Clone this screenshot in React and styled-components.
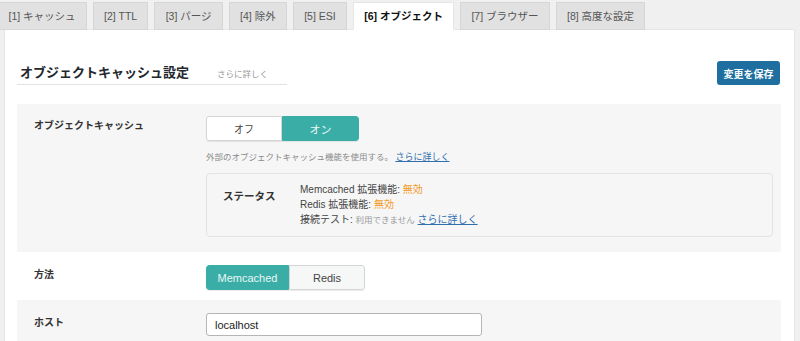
import React from 'react'
import styled, { createGlobalStyle } from 'styled-components'

const GlobalStyle = createGlobalStyle`
  html, body {
    margin: 0;
    padding: 0;
    background: #f0f0f1;
    font-family: "Liberation Sans", "Noto Sans CJK JP", sans-serif;
    color: #333;
  }
`

const tabs = [
  '[1] キャッシュ',
  '[2] TTL',
  '[3] パージ',
  '[4] 除外',
  '[5] ESI',
  '[6] オブジェクト',
  '[7] ブラウザー',
  '[8] 高度な設定',
]

const App = () => {
  return (
    <Page>
      <GlobalStyle />
      <TabBar>
        {tabs.map((t, i) => (
          <Tab key={t} active={i === 5}>{t}</Tab>
        ))}
      </TabBar>
      <Panel>
        <Header>
          <TitleBlock>
            <Title>オブジェクトキャッシュ設定</Title>
            <MoreLink>さらに詳しく</MoreLink>
          </TitleBlock>
          <SaveButton>変更を保存</SaveButton>
        </Header>
        <Section>
          <Row shade>
            <Label>オブジェクトキャッシュ</Label>
            <Field>
              <Toggle>
                <ToggleButton width={76}>オフ</ToggleButton>
                <ToggleButton width={77} on>オン</ToggleButton>
              </Toggle>
              <Desc>
                外部のオブジェクトキャッシュ機能を使用する。 <Link size={9}>さらに詳しく</Link>
              </Desc>
              <StatusBox>
                <StatusLabel>ステータス</StatusLabel>
                <StatusLines>
                  <div>Memcached 拡張機能: <Warn>無効</Warn></div>
                  <div>Redis 拡張機能: <Warn>無効</Warn></div>
                  <div>接続テスト: <Muted>利用できません</Muted> <Link size={10}>さらに詳しく</Link></div>
                </StatusLines>
              </StatusBox>
            </Field>
          </Row>
          <Row>
            <Label>方法</Label>
            <Field>
              <Toggle>
                <ToggleButton width={83} on>Memcached</ToggleButton>
                <ToggleButton width={76} plain>Redis</ToggleButton>
              </Toggle>
            </Field>
          </Row>
          <Row shade last>
            <Label>ホスト</Label>
            <Field>
              <TextInput defaultValue="localhost" />
            </Field>
          </Row>
        </Section>
      </Panel>
    </Page>
  )
}
export default App

const Page = styled.div`
  width: 800px;
  height: 341px;
  overflow: hidden;
`

const TabBar = styled.div`
  display: flex;
  gap: 6px;
  padding-top: 2px;
  margin-left: -3px;
  position: relative;
  z-index: 1;
`

const Tab = styled.div`
  height: 26px;
  line-height: 26px;
  padding: 0 10px 0 10.5px;
  font-size: 10.5px;
  white-space: nowrap;
  border: 1px solid ${(p) => (p.active ? '#e6e6e6' : '#d6d6d6')};
  border-bottom-color: ${(p) => (p.active ? '#fff' : '#d6d6d6')};
  background: ${(p) => (p.active ? '#fff' : '#e1e1e1')};
  color: ${(p) => (p.active ? '#111' : '#555')};
  font-weight: ${(p) => (p.active ? 700 : 400)};
  margin-bottom: -1px;
`

const Panel = styled.div`
  background: #fff;
  margin: 0 5px 0 4px;
  border: 1px solid #e6e6e6;
  padding: 31px 13px 0 12px;
  height: 400px;
`

const Header = styled.div`
  display: flex;
  justify-content: space-between;
  align-items: center;
  margin-bottom: 19px;
`

const TitleBlock = styled.div`
  display: flex;
  align-items: center;
  width: 267px;
  padding: 2px 0 1px 3px;
  border-bottom: 1px solid #e2e2e2;
`

const Title = styled.span`
  font-size: 13px;
  font-weight: 700;
  color: #23282d;
  line-height: 20px;
`

const MoreLink = styled.span`
  font-size: 8.5px;
  color: #9a9a9a;
  margin-left: 28px;
`

const SaveButton = styled.button`
  font-family: inherit;
  width: 63px;
  height: 24px;
  padding: 0;
  border: none;
  border-radius: 3px;
  background: #1e6ea0;
  color: #fff;
  font-size: 10px;
  font-weight: 600;
  margin-right: 1px;
`

const Section = styled.div`
  display: flex;
  flex-direction: column;
`

const Row = styled.div`
  display: grid;
  grid-template-columns: 172px 1fr;
  padding: ${(p) => (p.shade ? '12px 8px 15px 17px' : '13px 8px 10px 17px')};
  background: ${(p) => (p.shade ? '#f6f6f6' : '#fff')};
  ${(p) => (p.last ? 'padding-top: 13px; padding-bottom: 20px;' : '')}
`

const Label = styled.div`
  font-size: 10px;
  font-weight: 700;
  color: #333;
  line-height: 18px;
  padding-top: 1px;
`

const Field = styled.div`
  display: flex;
  flex-direction: column;
  align-items: flex-start;
`

const Toggle = styled.div`
  display: flex;
  border-radius: 3px;
  overflow: hidden;
  box-shadow: 0 1px 1px rgba(0, 0, 0, 0.08);
`

const ToggleButton = styled.div`
  width: ${(p) => p.width}px;
  height: 25px;
  box-sizing: border-box;
  display: flex;
  align-items: center;
  justify-content: center;
  font-size: ${(p) => (p.on || p.plain ? '11px' : '10px')};
  background: ${(p) => (p.on ? '#3aaea6' : p.plain ? '#f6f7f7' : '#fff')};
  color: ${(p) => (p.on ? '#e8f7f6' : '#444')};
  border: 1px solid ${(p) => (p.on ? '#3aaea6' : '#d4d4d4')};
  &:first-child {
    border-radius: 3px 0 0 3px;
  }
  &:last-child {
    border-radius: 0 3px 3px 0;
  }
`

const Desc = styled.div`
  font-size: 8.5px;
  color: #8a8a8a;
  margin-top: 9px;
  line-height: 14px;
`

const Link = styled.span`
  font-size: ${(p) => p.size}px;
  color: #2f6fae;
  text-decoration: underline;
`

const StatusBox = styled.div`
  margin-top: 9px;
  align-self: stretch;
  display: grid;
  grid-template-columns: 77px 1fr;
  padding: 8px 16px 10px 16px;
  border: 1px solid #e3e3e3;
  border-radius: 4px;
  background: #f6f6f6;
  height: 64px;
  box-sizing: border-box;
`

const StatusLabel = styled.div`
  font-size: 10.5px;
  font-weight: 700;
  color: #333;
  line-height: 15px;
  padding-top: 7px;
`

const StatusLines = styled.div`
  font-size: 10px;
  line-height: 15px;
  color: #444;
`

const Warn = styled.span`
  color: #f39a2b;
`

const Muted = styled.span`
  font-size: 8.5px;
  color: #999;
`

const TextInput = styled.input`
  width: 276px;
  height: 23px;
  box-sizing: border-box;
  border: 1px solid #b5b5b5;
  border-radius: 3px;
  padding: 0 8px;
  font-family: "Liberation Sans", sans-serif;
  font-size: 11px;
  color: #222;
  background: #fff;
`
